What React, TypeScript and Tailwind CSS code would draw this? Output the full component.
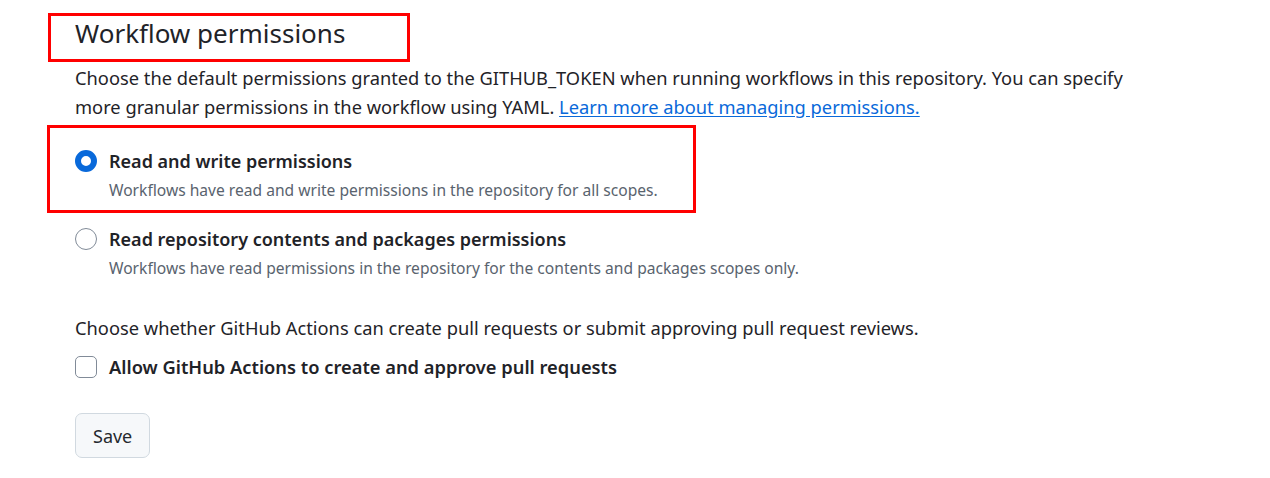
import React from "react";

const font = { fontFamily: '"Noto Sans", "Open Sans", sans-serif' };

function Radio({ checked }: { checked?: boolean }) {
  return checked ? (
    <span className="mt-[1px] box-border inline-block h-[22px] w-[22px] shrink-0 rounded-full border-[6px] border-[#0969da] bg-white" />
  ) : (
    <span className="mt-[1px] box-border inline-block h-[22px] w-[22px] shrink-0 rounded-full border border-[#818b98] bg-white" />
  );
}

export default function App() {
  return (
    <div className="relative h-[478px] w-[1270px] overflow-hidden bg-white text-[#1f2328]" style={font}>
      {/* annotation boxes */}
      <div className="pointer-events-none absolute left-[48px] top-[13px] h-[49px] w-[362px] border-[3px] border-[#ff0000]" />
      <div className="pointer-events-none absolute left-[47px] top-[125px] h-[88px] w-[649px] border-[3px] border-[#ff0000]" />

      <div className="pl-[75px] pt-[14px]">
        <h2 className="text-[26px] leading-[38px] font-normal">Workflow permissions</h2>

        <p className="mt-[11px] w-[1060px] text-[18.3px] leading-[29px]">
          Choose the default permissions granted to the GITHUB_TOKEN when running workflows in this repository. You can specify more
          granular permissions in the workflow using YAML.{" "}
          <a className="text-[#0969da] underline underline-offset-2">Learn more about managing permissions.</a>
        </p>

        <div className="mt-[28px] flex gap-[12px]">
          <Radio checked />
          <div>
            <div className="text-[18px] leading-[24px] font-semibold">Read and write permissions</div>
            <div className="mt-[7px] text-[15.6px] leading-[20px] text-[#59636e]">
              Workflows have read and write permissions in the repository for all scopes.
            </div>
          </div>
        </div>

        <div className="mt-[27px] flex gap-[12px]">
          <Radio />
          <div>
            <div className="text-[18px] leading-[24px] font-semibold">Read repository contents and packages permissions</div>
            <div className="mt-[7px] text-[15.6px] leading-[20px] text-[#59636e]">
              Workflows have read permissions in the repository for the contents and packages scopes only.
            </div>
          </div>
        </div>

        <p className="mt-[35px] text-[18.3px] leading-[29px]">
          Choose whether GitHub Actions can create pull requests or submit approving pull request reviews.
        </p>

        <div className="mt-[13px] flex items-center gap-[12px]">
          <span className="box-border inline-block h-[22px] w-[22px] rounded-[5px] border border-[#818b98] bg-white" />
          <span className="text-[18.3px] leading-[24px] font-semibold">Allow GitHub Actions to create and approve pull requests</span>
        </div>

        <button className="mt-[34px] h-[45px] rounded-[7px] border border-[#d1d9e0] bg-[#f6f8fa] px-[17px] pt-[2px] text-[18px] text-[#25292e]">
          Save
        </button>
      </div>
    </div>
  );
}
